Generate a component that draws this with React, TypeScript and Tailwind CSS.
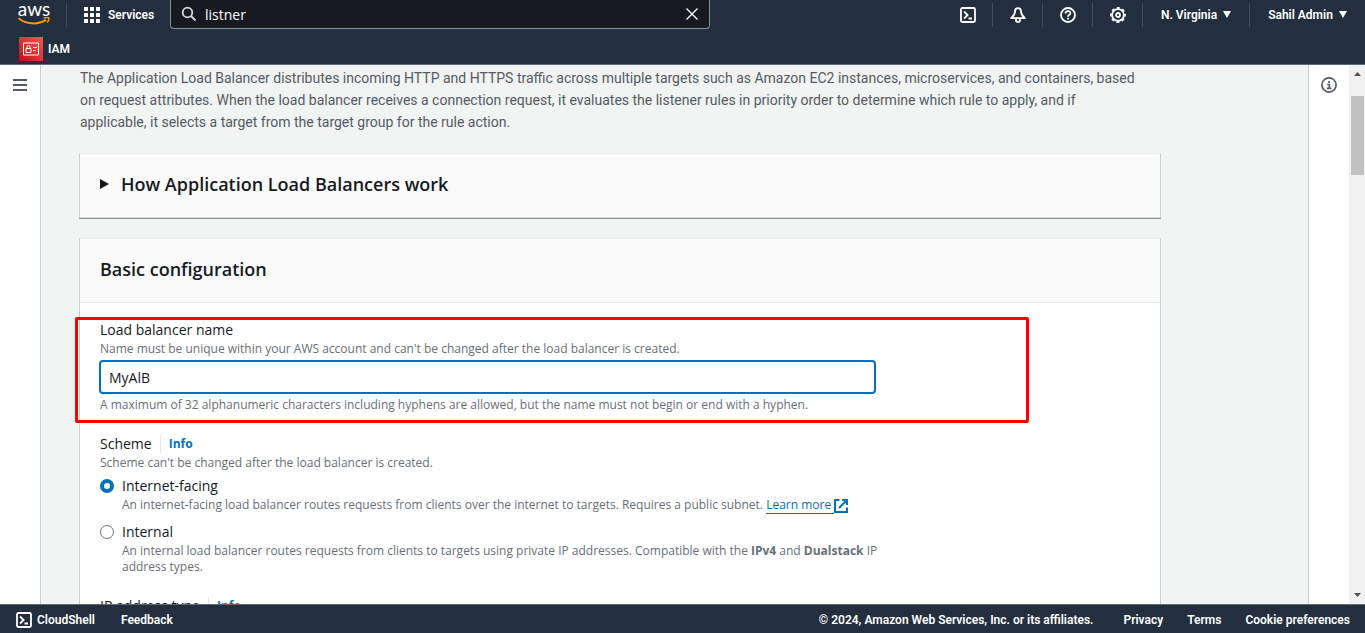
import React, { useState } from "react";

function CloudShellIcon({ className }: { className: string }) {
  return (
    <svg viewBox="0 0 16 16" fill="none" stroke="currentColor" strokeWidth="1.8" className={className} aria-hidden="true">
      <rect x="1" y="1" width="14" height="14" rx="1.5" />
      <path d="M4 4.5 7.6 8 4 11.5M8.5 11.5H12" />
    </svg>
  );
}

function AwsLogo() {
  return (
    <a href="#home" aria-label="AWS home" className="mr-4 flex w-8 flex-col items-center pb-1">
      <span className="font-['Lato',sans-serif] text-[19px] font-normal leading-4 text-white">aws</span>
      <svg viewBox="0 0 32 8" className="h-2 w-8" fill="none" stroke="#f90" aria-hidden="true">
        <path d="M.5 1.200C8 7.600 20 8 28 2.800" strokeWidth="2" />
        <path d="M25.400 1.200C28 .4 30.600.4 30.800 1c.2.8-.4 3.200-1.800 4.600" strokeWidth="1.400" />
      </svg>
    </a>
  );
}

function Divider() {
  return <span className="h-6 w-px bg-[#414d5c]" />;
}

function IconButton({ label, children }: { label: string; children: React.ReactNode }) {
  return (
    <button type="button" aria-label={label} className="flex w-[49px] justify-center text-white">
      {children}
    </button>
  );
}

function Caret() {
  return (
    <svg viewBox="0 0 8 7" className="h-[7px] w-2" fill="currentColor" aria-hidden="true">
      <path d="M0 0h8L4 7Z" />
    </svg>
  );
}

function Header() {
  const [query, setQuery] = useState("listner");
  return (
    <header className="shrink-0 border-b border-[#5f6b7a] bg-[#232f3e] font-['Roboto','Open_Sans',sans-serif] text-[12px] font-semibold text-white">
      <div className="flex h-[29px] items-center pl-[18px]">
        <AwsLogo />
        <Divider />
        <button type="button" className="flex w-[103px] items-center gap-2 pl-[17px]">
          <svg viewBox="0 0 16 16" className="h-4 w-4 shrink-0" fill="currentColor" aria-hidden="true">
            {[0, 6, 12].map((y) => [0, 6, 12].map((x) => <rect key={`${x}-${y}`} x={x} y={y} width="4" height="4" rx="0.5" />))}
          </svg>
          Services
        </button>
        <label className="flex h-[29px] w-[540px] items-center gap-2 rounded-b-sm border border-t-0 border-[#879596] bg-[#161920] px-[10px]">
          <svg viewBox="0 0 16 16" className="h-4 w-4 shrink-0 text-[#d5dbdb]" fill="none" stroke="currentColor" strokeWidth="1.8" aria-hidden="true">
            <circle cx="6.5" cy="6.5" r="4.8" />
            <path d="m10 10 4.500 4.500" />
          </svg>
          <input
            aria-label="Search"
            value={query}
            onChange={(e) => setQuery(e.target.value)}
            className="min-w-0 flex-1 bg-transparent font-['Open_Sans','Noto_Sans',sans-serif] text-[14px] font-normal text-white outline-none"
          />
          <button type="button" aria-label="Clear search" onClick={() => setQuery("")}>
            <svg viewBox="0 0 14 14" className="h-[14px] w-[14px] text-[#e9ebed]" fill="none" stroke="currentColor" strokeWidth="1.5" aria-hidden="true">
              <path d="m1.500 1.500 11 11m0-11-11 11" />
            </svg>
          </button>
        </label>
        <div className="ml-auto flex items-center">
          <IconButton label="CloudShell">
            <CloudShellIcon className="h-4 w-4" />
          </IconButton>
          <Divider />
          <IconButton label="Notifications">
            <svg viewBox="0 0 16 16" className="h-4 w-4" fill="none" stroke="currentColor" strokeWidth="1.8" strokeLinejoin="round" aria-hidden="true">
              <path d="M8 1.200c-2.100 0-3 1.600-3 3.400 0 2.700-1.100 4.300-3.800 6.600h13.600C12.100 8.900 11 7.300 11 4.600c0-1.800-.9-3.400-3-3.400Z" />
              <path d="M6 11.500v1.700c0 1 .9 1.700 2 1.700s2-.7 2-1.700v-1.700" />
            </svg>
          </IconButton>
          <Divider />
          <IconButton label="Help">
            <svg viewBox="0 0 16 16" className="h-4 w-4" fill="none" stroke="currentColor" strokeWidth="1.8" aria-hidden="true">
              <circle cx="8" cy="8" r="7" />
              <path d="M5.600 6.500C5.600 5 6.600 4.200 8 4.200s2.400.8 2.400 2C10.400 7.800 8 7.700 8 9.700M8 10.700v1.800" />
            </svg>
          </IconButton>
          <Divider />
          <IconButton label="Settings">
            <svg viewBox="0 0 16 16" className="h-4 w-4" fill="none" stroke="currentColor" strokeWidth="1.8" aria-hidden="true">
              <circle cx="8" cy="8" r="5.9" />
              <circle cx="8" cy="8" r="7" strokeDasharray="3 2.498" strokeDashoffset="1.5" />
              <circle cx="8" cy="8" r="2" />
            </svg>
          </IconButton>
          <Divider />
          <button type="button" className="flex w-[106px] items-center justify-center gap-[6px] whitespace-nowrap">
            N. Virginia
            <Caret />
          </button>
          <Divider />
          <button type="button" className="flex w-[115px] items-center justify-center gap-[6px] whitespace-nowrap">
            Sahil Admin
            <Caret />
          </button>
        </div>
      </div>
      <nav className="flex h-[35px] items-center px-[19px] pt-1">
        <a href="#iam" className="flex items-center gap-[5px]">
          <span className="flex h-6 w-6 items-center justify-center bg-linear-to-tr from-[#bd0816] to-[#ff5252]">
            <svg viewBox="0 0 16 14" className="h-[14px] w-4" fill="none" stroke="white" aria-hidden="true">
              <path d="M.5 1h15v12H.5ZM3 6.500h5v4H3ZM4 6.500V5a1.500 1.500 0 0 1 3 0v1.500M10 5.500h4M10 8.500h2.500" />
            </svg>
          </span>
          IAM
        </a>
      </nav>
    </header>
  );
}

function LabelWithInfo({ children }: { children: React.ReactNode }) {
  return (
    <div className="flex items-center gap-2 leading-[22px]">
      <span>{children}</span>
      <span className="h-[18px] w-px bg-[#e3e6e6]" />
      <a href="#info" className="text-[12px] font-bold text-[#0073bb]">Info</a>
    </div>
  );
}

const radioClass =
  "mt-1 h-[14px] w-[14px] shrink-0 appearance-none rounded-full border border-[#687078] bg-white checked:border-4 checked:border-[#0073bb]";
const hintClass = "text-[12px] leading-4 text-[#687078]";

function BasicConfiguration() {
  const [name, setName] = useState("MyAlB");
  const [scheme, setScheme] = useState("internet-facing");
  return (
    <section className="mt-5 border border-t-[#eaeded] border-x-[#c9d0d0] border-b-[#879596] bg-white">
      <div className="flex h-16 items-center border-b border-[#eaeded] bg-[#fafafa] px-5 pb-1">
        <h2 className="text-[18px] font-semibold leading-[22px] text-[#16191f]">Basic configuration</h2>
      </div>
      <div className="flex max-w-[830px] flex-col gap-5 px-5 py-4">
        <div className="relative max-w-[775px]">
          <label htmlFor="lb-name" className="block leading-[22px]">Load balancer name</label>
          <p id="lb-hint" className={hintClass}>Name must be unique within your AWS account and can't be changed after the load balancer is created.</p>
          <input
            id="lb-name"
            aria-describedby="lb-hint"
            value={name}
            onChange={(e) => setName(e.target.value)}
            className="-mx-px my-[3px] block h-[34px] w-[calc(100%+2px)] rounded-sm border-2 border-[#0073bb] bg-white px-2 outline-none"
          />
          <p className={hintClass}>A maximum of 32 alphanumeric characters including hyphens are allowed, but the name must not begin or end with a hyphen.</p>
          <div className="pointer-events-none absolute -bottom-[10px] -left-[25px] -right-[154px] -top-[2px] rounded-xs border-3 border-[#ff0000]" />
        </div>
        <fieldset>
          <legend className="contents"><LabelWithInfo>Scheme</LabelWithInfo></legend>
          <p className={hintClass}>Scheme can't be changed after the load balancer is created.</p>
          <label className="mt-1 flex gap-2">
            <input type="radio" name="scheme" className={radioClass} checked={scheme === "internet-facing"} onChange={() => setScheme("internet-facing")} />
            <span>
              <span className="block leading-[22px]">Internet-facing</span>
              <span className={`block ${hintClass}`}>
                An internet-facing load balancer routes requests from clients over the internet to targets. Requires a public subnet.{" "}
                <a href="#learn" className="whitespace-nowrap text-[#0073bb]">
                  <span className="border-b border-[#0073bb] pr-[3px]">Learn more</span>
                  <svg viewBox="0 0 14 14" className="inline h-[14px] w-[14px]" fill="none" stroke="currentColor" strokeWidth="2" aria-hidden="true">
                    <path d="M5.500 1H1v12h12V8.500M8 1h5v5M13 1 5 9" />
                  </svg>
                </a>
              </span>
            </span>
          </label>
          <label className="mt-2 flex gap-2">
            <input type="radio" name="scheme" className={radioClass} checked={scheme === "internal"} onChange={() => setScheme("internal")} />
            <span>
              <span className="block leading-[22px]">Internal</span>
              <span className={`block ${hintClass}`}>
                An internal load balancer routes requests from clients to targets using private IP addresses. Compatible with the <b>IPv4</b> and <b>Dualstack</b> IP address types.
              </span>
            </span>
          </label>
        </fieldset>
        <LabelWithInfo>IP address type</LabelWithInfo>
      </div>
    </section>
  );
}

function Scrollbar() {
  return (
    <div className="flex w-4 shrink-0 flex-col items-center bg-[#f1f1f1]" aria-hidden="true">
      <svg viewBox="0 0 16 31" className="h-[31px] w-4" fill="#505050"><path d="M5 11 8.500 7 12 11Z" /></svg>
      <div className="ml-px h-[79px] w-[13px] bg-[#c1c1c1]" />
      <svg viewBox="0 0 16 16" className="mt-auto h-4 w-4" fill="#505050"><path d="M5 5h7L8.500 9Z" /></svg>
    </div>
  );
}

export default function App() {
  return (
    <div className="flex h-screen flex-col overflow-hidden bg-[#f2f3f3] font-['Open_Sans','Noto_Sans',sans-serif] text-[14px] text-[#16191f]">
      <Header />
      <div className="flex min-h-0 flex-1">
        <aside className="w-[41px] shrink-0 border-r border-[#c9d0d0] bg-white pl-3 pt-[13px]">
          <button type="button" aria-label="Open navigation" className="block text-[#545b64]">
            <svg viewBox="0 0 16 14" className="h-[14px] w-4" stroke="currentColor" strokeWidth="2" aria-hidden="true"><path d="M1 2h14M1 7h14M1 12h14" /></svg>
          </button>
        </aside>
        <main className="min-w-0 flex-1 overflow-hidden pl-[38px] pr-10 pt-[2px]">
          <div className="max-w-[1082px]">
            <p className="pl-px pr-5 font-['Roboto','Open_Sans',sans-serif] leading-[22px] text-[#545b64]">
              The Application Load Balancer distributes incoming HTTP and HTTPS traffic across multiple targets such as Amazon EC2 instances, microservices, and containers, based on request attributes. When the load balancer receives a connection request, it evaluates the listener rules in priority order to determine which rule to apply, and if applicable, it selects a target from the target group for the rule action.
            </p>
            <section className="mt-5 border border-t-[#eaeded] border-x-[#c9d0d0] border-b-[#d5dbdb] bg-[#fafafa] shadow-[0_1px_0_#879596]">
              <h2>
                <button type="button" className="flex h-[63px] w-full items-center gap-3 px-5 pb-1 text-left text-[18px] font-semibold leading-[22px]">
                  <svg viewBox="0 0 9 10" className="h-[10px] w-[9px]" fill="currentColor" aria-hidden="true"><path d="M0 0 9 5 0 10Z" /></svg>
                  How Application Load Balancers work
                </button>
              </h2>
            </section>
            <BasicConfiguration />
          </div>
        </main>
        <aside className="w-[41px] shrink-0 border-l border-[#c9d0d0] bg-white pl-3 pt-3">
          <button type="button" aria-label="Open info panel" className="block text-[#545b64]">
            <svg viewBox="0 0 16 16" className="h-4 w-4" fill="none" stroke="currentColor" strokeWidth="1.7" aria-hidden="true">
              <circle cx="8" cy="8" r="7.1" />
              <path d="M8 4v2M6.200 7.500H8.300V11.300M6 11.300h4.200" />
            </svg>
          </button>
        </aside>
        <Scrollbar />
      </div>
      <footer className="flex h-[29px] shrink-0 items-center border-t border-[#5f6b7a] bg-[#232f3e] pl-4 pr-[15px] pt-[2px] font-['Roboto','Open_Sans',sans-serif] text-[12px] font-semibold text-white">
        <button type="button" className="flex items-center gap-[5px]">
          <CloudShellIcon className="h-4 w-4" />
          CloudShell
        </button>
        <a href="#feedback" className="ml-[26px]">Feedback</a>
        <span className="ml-auto">© 2024, Amazon Web Services, Inc. or its affiliates.</span>
        <a href="#privacy" className="ml-[30px]">Privacy</a>
        <a href="#terms" className="ml-6">Terms</a>
        <a href="#cookies" className="ml-6">Cookie preferences</a>
      </footer>
    </div>
  );
}
